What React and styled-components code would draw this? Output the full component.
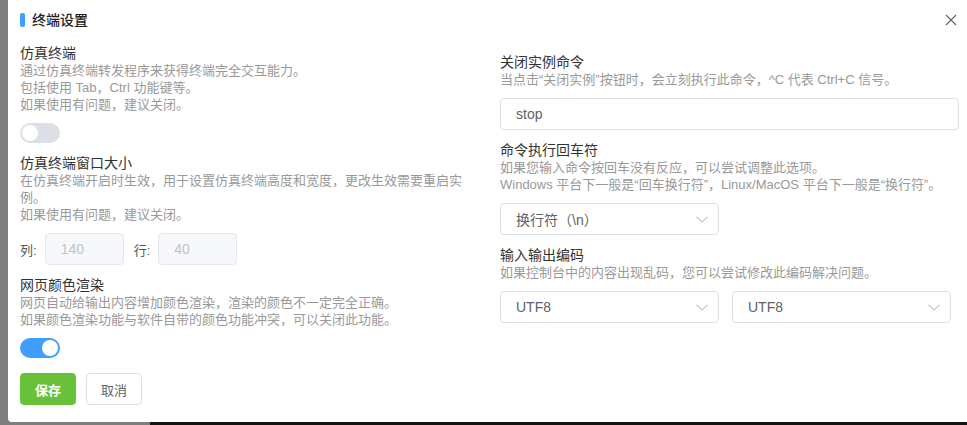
import React from "react";
import styled, { createGlobalStyle } from "styled-components";

const GlobalStyle = createGlobalStyle`
  html, body { margin: 0; padding: 0; overflow: hidden; }
  body {
    font-family: "Liberation Sans", "Noto Sans CJK SC", sans-serif;
    -webkit-font-smoothing: antialiased;
  }
  * { box-sizing: border-box; }
`;

const Backdrop = styled.div`
  width: 967px;
  height: 425px;
  padding-left: 8px;
  overflow: hidden;
  background: linear-gradient(to right, #7e7e7e 150px, #131313 150px);
`;

const Dialog = styled.div`
  width: 963px;
  height: 422px;
  background: #fff;
  border-bottom-left-radius: 4px;
  border-bottom-right-radius: 4px;
`;

const Header = styled.div`
  height: 40px;
  display: flex;
  align-items: center;
  justify-content: space-between;
  padding: 0 14px 0 12px;
`;

const TitleWrap = styled.div`
  display: flex;
  align-items: center;
  gap: 7px;
`;

const Accent = styled.span`
  width: 5px;
  height: 14px;
  border-radius: 2px;
  background: #409eff;
`;

const Title = styled.span`
  font-size: 14px;
  font-weight: 500;
  color: #222;
  line-height: 18px;
`;

const CloseBtn = styled.button`
  border: 0;
  background: none;
  padding: 0;
  width: 12px;
  height: 12px;
  display: flex;
  cursor: pointer;
`;

const Body = styled.div`
  display: grid;
  grid-template-columns: 450px 1fr;
  column-gap: 30px;
  padding: 4px 12px 0 12px;
`;

const Column = styled.div`
  display: flex;
  flex-direction: column;
  gap: 11px;
  padding-top: ${(p) => p.$offset || 0}px;
`;

const Section = styled.div`
  display: flex;
  flex-direction: column;
`;

const Label = styled.div`
  font-size: 14px;
  line-height: 18px;
  color: #333;
`;

const Desc = styled.div`
  font-size: 13px;
  line-height: 17px;
  color: #999;
`;

const Control = styled.div`
  margin-top: 10px;
  display: flex;
  align-items: center;
  gap: ${(p) => p.$gap || 0}px;
`;

const Switch = styled.div`
  width: 40px;
  height: 20px;
  border-radius: 10px;
  background: ${(p) => (p.$on ? "#409eff" : "#dcdfe6")};
  position: relative;
  &::after {
    content: "";
    position: absolute;
    top: 2px;
    left: ${(p) => (p.$on ? "22px" : "2px")};
    width: 16px;
    height: 16px;
    border-radius: 50%;
    background: #fff;
  }
`;

const FieldLabel = styled.span`
  font-size: 13px;
  color: #555;
  margin-right: 8px;
`;

const SizeInput = styled.input`
  width: 79px;
  height: 32px;
  border: 1px solid #e4e7ed;
  background: #f5f7fa;
  border-radius: 4px;
  padding: 0 15px;
  font-size: 14px;
  font-family: inherit;
  color: #c0c4cc;
  outline: none;
  margin-right: ${(p) => p.$mr || 0}px;
`;

const TextInput = styled.input`
  width: 459px;
  height: 32px;
  border: 1px solid #dcdfe6;
  border-radius: 4px;
  padding: 0 15px;
  font-size: 14px;
  font-family: inherit;
  color: #606266;
  background: #fff;
  outline: none;
`;

const Select = styled.div`
  width: 219px;
  height: 32px;
  border: 1px solid #dcdfe6;
  border-radius: 4px;
  padding: 0 10px 0 15px;
  display: flex;
  align-items: center;
  justify-content: space-between;
  font-size: 14px;
  color: #606266;
  background: #fff;
`;

const Buttons = styled.div`
  display: flex;
  gap: 10px;
  margin-top: 4px;
`;

const Button = styled.button`
  height: 32px;
  padding: 0 14px;
  border-radius: 4px;
  font-size: 13px;
  font-family: inherit;
  cursor: pointer;
  border: 1px solid ${(p) => (p.$primary ? "#67c23a" : "#dcdfe6")};
  background: ${(p) => (p.$primary ? "#67c23a" : "#fff")};
  color: ${(p) => (p.$primary ? "#fff" : "#606266")};
  font-weight: ${(p) => (p.$primary ? 600 : 400)};
`;

const Chevron = () => (
  <svg width="12" height="7" viewBox="0 0 12 7">
    <path d="M0.5 0.8 L6 6 L11.5 0.8" fill="none" stroke="#c0c4cc" strokeWidth="1.1" />
  </svg>
);

const CloseIcon = () => (
  <svg width="12" height="12" viewBox="0 0 12 12">
    <path d="M1 1 L11 11 M11 1 L1 11" stroke="#666" strokeWidth="1.2" />
  </svg>
);

export default function App() {
  return (
    <>
      <GlobalStyle />
      <Backdrop>
        <Dialog>
          <Header>
            <TitleWrap>
              <Accent />
              <Title>终端设置</Title>
            </TitleWrap>
            <CloseBtn aria-label="close">
              <CloseIcon />
            </CloseBtn>
          </Header>
          <Body>
            <Column>
              <Section>
                <Label>仿真终端</Label>
                <Desc>
                  通过仿真终端转发程序来获得终端完全交互能力。
                  <br />
                  包括使用 Tab，Ctrl 功能键等。
                  <br />
                  如果使用有问题，建议关闭。
                </Desc>
                <Control>
                  <Switch />
                </Control>
              </Section>
              <Section>
                <Label>仿真终端窗口大小</Label>
                <Desc>
                  在仿真终端开启时生效，用于设置仿真终端高度和宽度，更改生效需要重启实例。
                  <br />
                  如果使用有问题，建议关闭。
                </Desc>
                <Control>
                  <FieldLabel>列:</FieldLabel>
                  <SizeInput disabled value="140" readOnly $mr={10} />
                  <FieldLabel>行:</FieldLabel>
                  <SizeInput disabled value="40" readOnly />
                </Control>
              </Section>
              <Section>
                <Label>网页颜色渲染</Label>
                <Desc>
                  网页自动给输出内容增加颜色渲染，渲染的颜色不一定完全正确。
                  <br />
                  如果颜色渲染功能与软件自带的颜色功能冲突，可以关闭此功能。
                </Desc>
                <Control>
                  <Switch $on />
                </Control>
              </Section>
              <Buttons>
                <Button $primary>保存</Button>
                <Button>取消</Button>
              </Buttons>
            </Column>
            <Column $offset={9}>
              <Section>
                <Label>关闭实例命令</Label>
                <Desc>当点击“关闭实例”按钮时，会立刻执行此命令，^C 代表 Ctrl+C 信号。</Desc>
                <Control>
                  <TextInput value="stop" readOnly />
                </Control>
              </Section>
              <Section>
                <Label>命令执行回车符</Label>
                <Desc>
                  如果您输入命令按回车没有反应，可以尝试调整此选项。
                  <br />
                  Windows 平台下一般是“回车换行符”，Linux/MacOS 平台下一般是“换行符”。
                </Desc>
                <Control>
                  <Select>
                    <span>换行符（\n）</span>
                    <Chevron />
                  </Select>
                </Control>
              </Section>
              <Section>
                <Label>输入输出编码</Label>
                <Desc>如果控制台中的内容出现乱码，您可以尝试修改此编码解决问题。</Desc>
                <Control $gap={13}>
                  <Select>
                    <span>UTF8</span>
                    <Chevron />
                  </Select>
                  <Select>
                    <span>UTF8</span>
                    <Chevron />
                  </Select>
                </Control>
              </Section>
            </Column>
          </Body>
        </Dialog>
      </Backdrop>
    </>
  );
}
